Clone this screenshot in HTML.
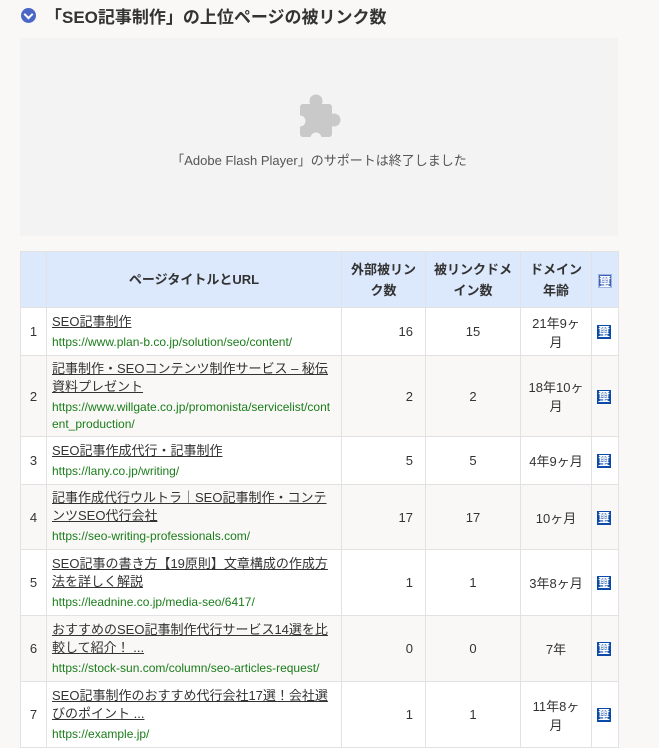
<!DOCTYPE html>
<html><head><meta charset="utf-8"><style>
*{margin:0;padding:0;box-sizing:border-box}
body{width:659px;height:717px;overflow:hidden;background:#f9f8f6;font-family:"Liberation Sans","Noto Sans CJK JP",sans-serif;color:#333;position:relative}
h2{position:absolute;left:21px;top:3px;font-size:17px;font-weight:bold;color:#333;display:flex;align-items:center;white-space:nowrap}
h2 .ic{width:15px;height:15px;border-radius:50%;background:#4a67c8;margin-right:9px;position:relative}
h2 .ic:after{content:"";position:absolute;left:4px;top:3px;width:5px;height:5px;border-right:2px solid #fff;border-bottom:2px solid #fff;transform:rotate(45deg)}
.flash{position:absolute;left:20px;top:38px;width:598px;height:198px;background:#f3f3f3;text-align:center}
.pz{position:absolute;left:290px;top:90px}
.flash p{position:absolute;top:112px;width:100%;font-size:13px;color:#555}
table{position:absolute;left:20px;top:251px;width:598px;border-collapse:collapse;font-size:13px;table-layout:fixed}
td,th{border:1px solid #e2e2e2;padding:0 5px}
th{background:#dce8fb;font-weight:bold;height:56px;line-height:21px;font-size:13px}
tr:nth-child(odd) td{background:#f9f8f6}
tr:nth-child(even) td{background:#fff}
td.n{text-align:center}
td.r{text-align:right;padding-right:12px}
td.c{text-align:center}
td.t a{color:#333;text-decoration:underline;line-height:18px;display:block}
td.t span{color:#1a7d1a;font-size:12px;line-height:17px;display:block;margin-top:3px;word-break:break-all}
.b{display:inline-block;width:14px;height:14px;background:#0b4aa8;color:#fff;font-size:12px;line-height:14px;text-align:center;vertical-align:middle;overflow:hidden;font-weight:bold}
th .b{background:#3a62b8;border:1px solid #9fb5e0}
</style></head><body>
<h2><span class="ic"></span>「SEO記事制作」の上位ページの被リンク数</h2>
<div class="flash">
<p>「Adobe Flash Player」のサポートは終了しました</p>
</div>
<svg class="pz" width="60" height="55" viewBox="290 90 60 55">
<rect x="300" y="104" width="32" height="33" rx="3" fill="#c9c9c9"/>
<circle cx="316" cy="101" r="6.5" fill="#c9c9c9"/>
<circle cx="334" cy="120" r="6.5" fill="#c9c9c9"/>
<circle cx="300" cy="121" r="5.5" fill="#f3f3f3"/>
<circle cx="316" cy="138" r="5.5" fill="#f3f3f3"/>
</svg>
<table>
<colgroup><col style="width:26px"><col style="width:295px"><col style="width:84px"><col style="width:95px"><col style="width:71px"><col style="width:27px"></colgroup>
<tr><th></th><th>ページタイトルとURL</th><th>外部被リン<br>ク数</th><th>被リンクドメ<br>イン数</th><th>ドメイン<br>年齢</th><th><span class="b">璽</span></th></tr>
<tr style="height:48px"><td class="n">1</td><td class="t"><a>SEO記事制作</a><span>https://www.plan-b.co.jp/solution/seo/content/</span></td><td class="r">16</td><td class="c">15</td><td class="c">21年9ヶ<br>月</td><td><span class="b">璽</span></td></tr>
<tr style="height:81px"><td class="n">2</td><td class="t"><a>記事制作・SEOコンテンツ制作サービス – 秘伝資料プレゼント</a><span>https://www.willgate.co.jp/promonista/servicelist/content_production/</span></td><td class="r">2</td><td class="c">2</td><td class="c">18年10ヶ<br>月</td><td><span class="b">璽</span></td></tr>
<tr style="height:48px"><td class="n">3</td><td class="t"><a>SEO記事作成代行・記事制作</a><span>https://lany.co.jp/writing/</span></td><td class="r">5</td><td class="c">5</td><td class="c">4年9ヶ月</td><td><span class="b">璽</span></td></tr>
<tr style="height:65px"><td class="n">4</td><td class="t"><a>記事作成代行ウルトラ｜SEO記事制作・コンテンツSEO代行会社</a><span>https://seo-writing-professionals.com/</span></td><td class="r">17</td><td class="c">17</td><td class="c">10ヶ月</td><td><span class="b">璽</span></td></tr>
<tr style="height:66px"><td class="n">5</td><td class="t"><a>SEO記事の書き方【19原則】文章構成の作成方法を詳しく解説</a><span>https://leadnine.co.jp/media-seo/6417/</span></td><td class="r">1</td><td class="c">1</td><td class="c">3年8ヶ月</td><td><span class="b">璽</span></td></tr>
<tr style="height:66px"><td class="n">6</td><td class="t"><a>おすすめのSEO記事制作代行サービス14選を比較して紹介！ ...</a><span>https://stock-sun.com/column/seo-articles-request/</span></td><td class="r">0</td><td class="c">0</td><td class="c">7年</td><td><span class="b">璽</span></td></tr>
<tr style="height:66px"><td class="n">7</td><td class="t"><a>SEO記事制作のおすすめ代行会社17選！会社選びのポイント ...</a><span>https://example.jp/</span></td><td class="r">1</td><td class="c">1</td><td class="c">11年8ヶ<br>月</td><td><span class="b">璽</span></td></tr>
</table>
</body></html>
